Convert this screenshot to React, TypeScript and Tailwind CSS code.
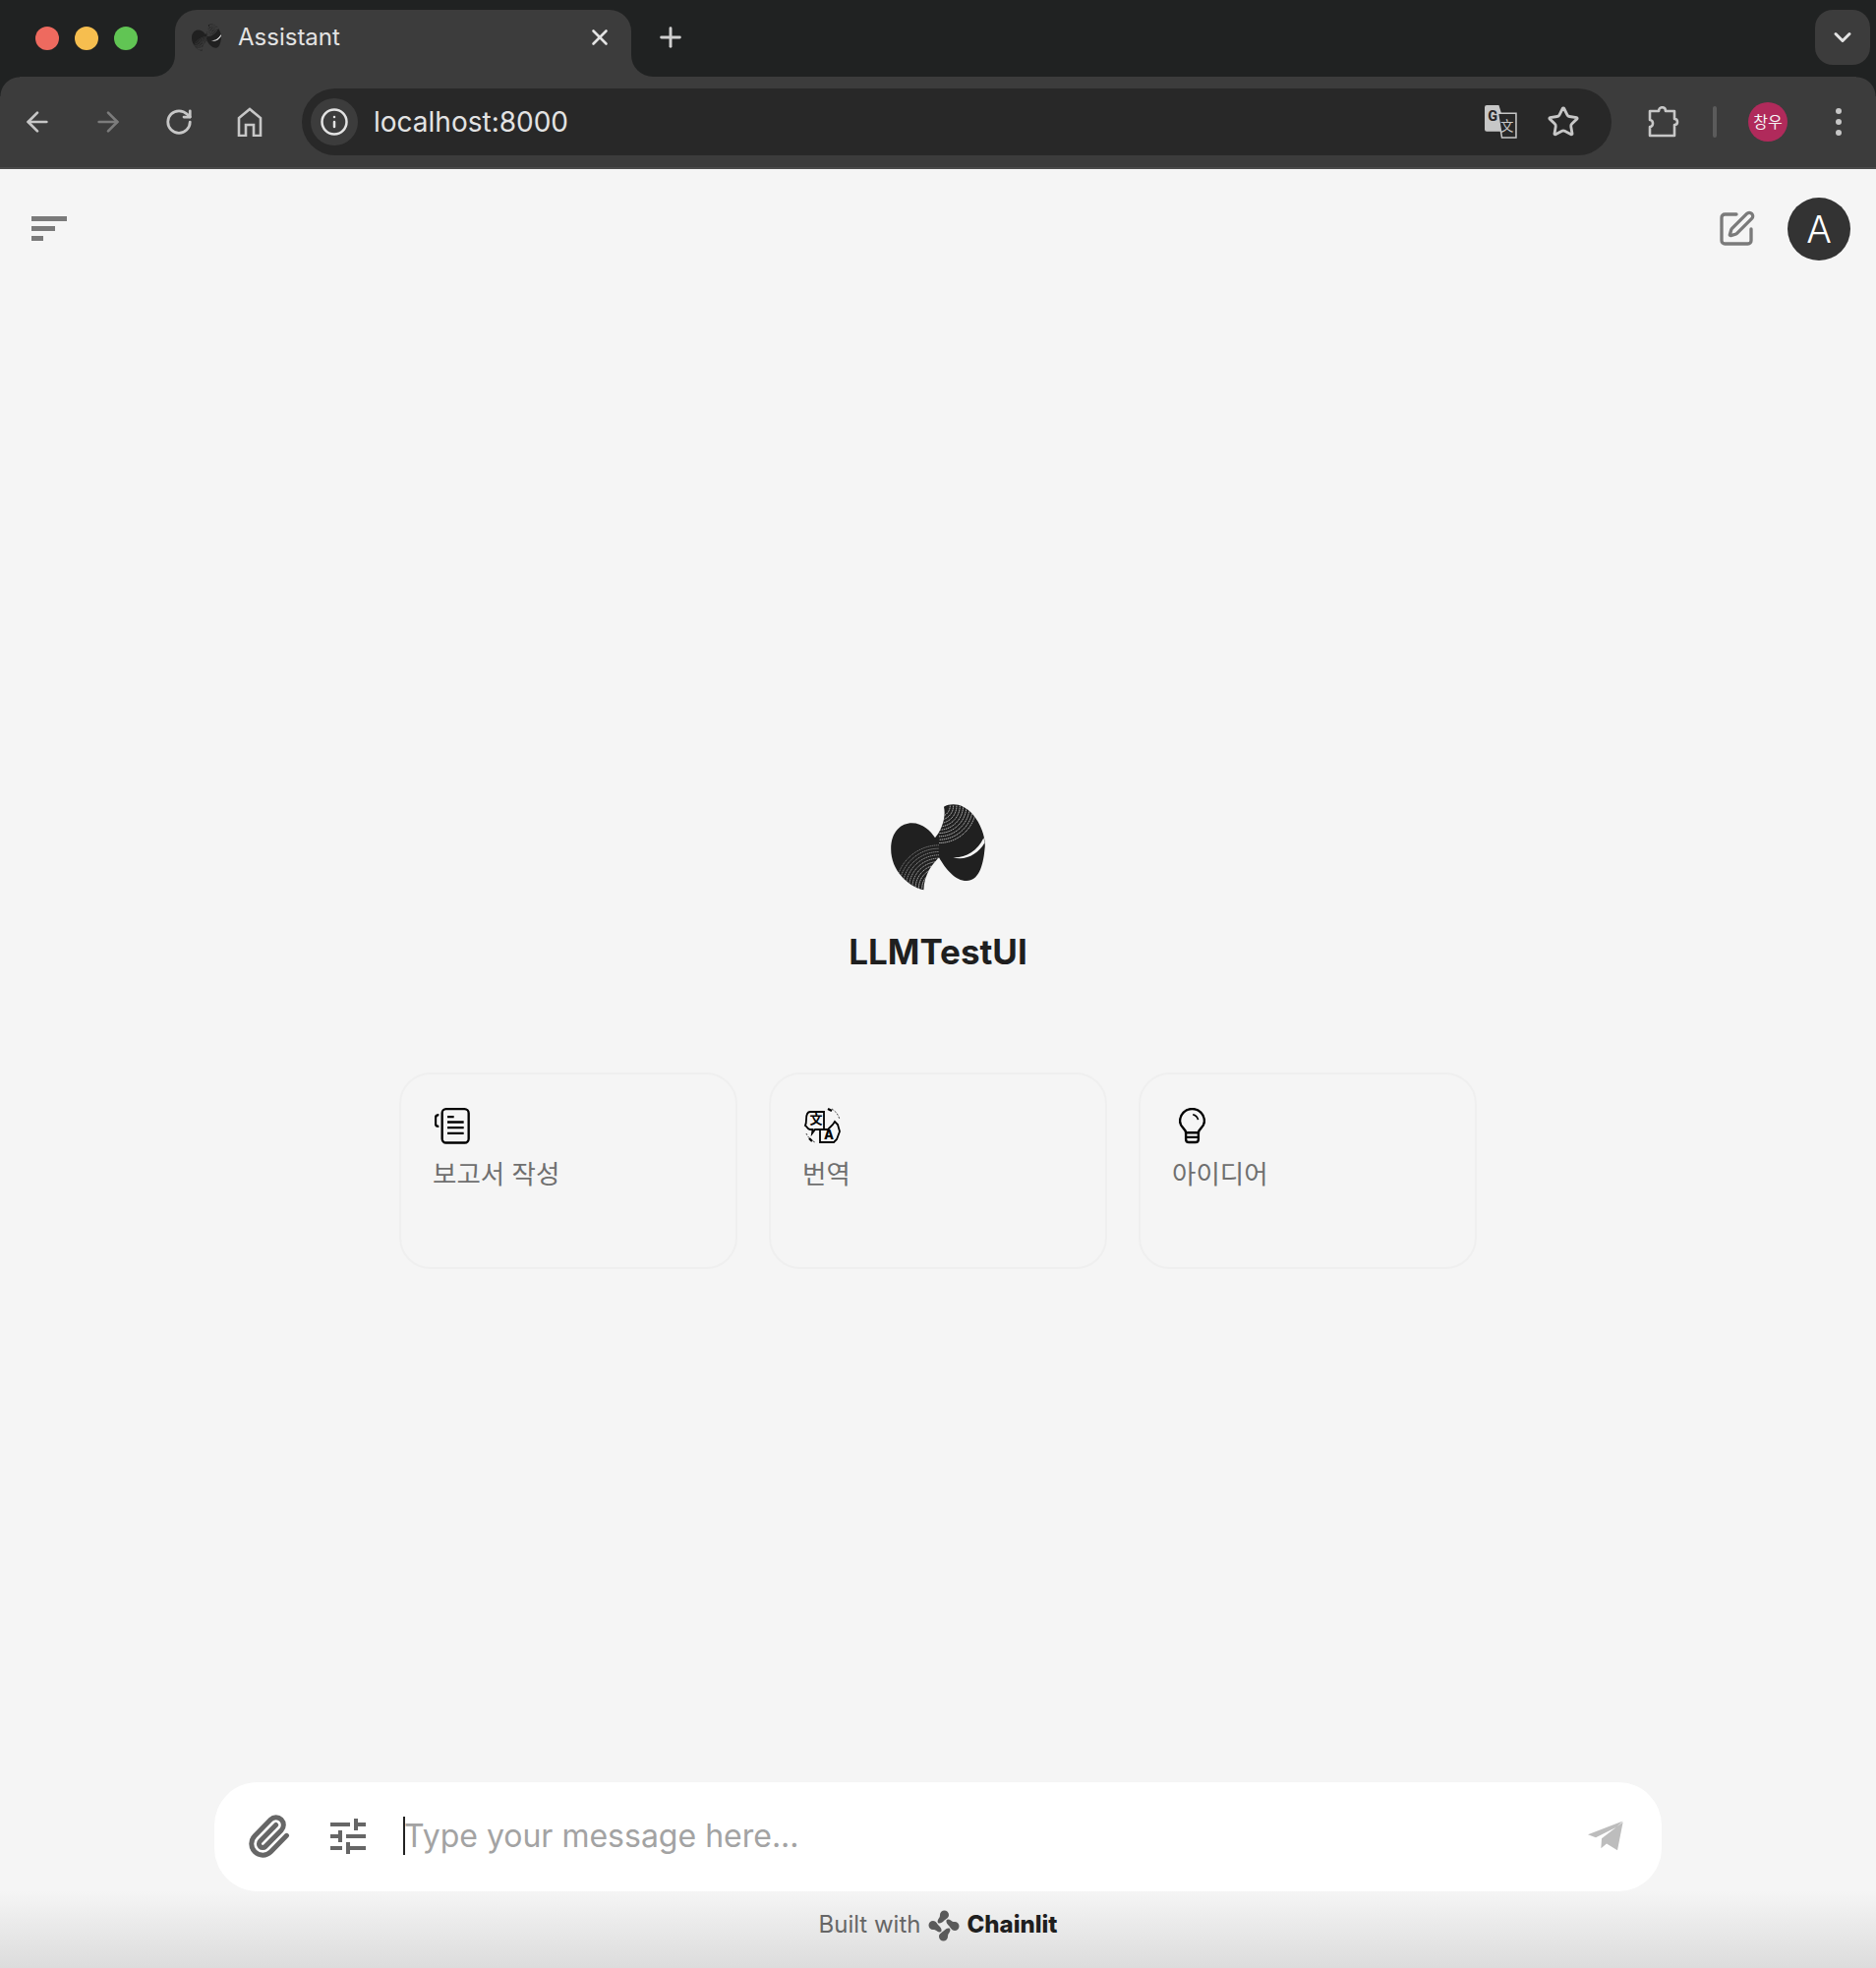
import React from "react";
import { ArrowLeft, ArrowRight, ChevronDown, Info, Paperclip, Plus, RotateCw, SquarePen, Star, X } from "lucide-react";

const leftRadii = [52, 62, 72, 82, 92, 102, 112, 122, 132];
const rightRadii = [34, 44, 54, 64, 74, 84, 94, 104, 114];

// twisted ribbon mark, drawn in the coordinates of the crop it was measured from
const Logo = ({ id, className = "" }: { id: string; className?: string }) => (
  <svg viewBox="198 84 288 268" className={className}>
    <defs>
      <clipPath id={id}>
        <path d="M360 95C385 82 420 85 450 120C475 150 490 195 485 225C480 280 465 322 430 322C395 322 365 285 345 250C325 270 300 300 298 350C250 340 198 290 198 225C198 170 230 145 262 145C295 145 320 170 333 190C350 170 368 130 360 95Z" />
      </clipPath>
    </defs>
    <path
      fill="#202020"
      d="M360 95C385 82 420 85 450 120C475 150 490 195 485 225C480 280 465 322 430 322C395 322 365 285 345 250C325 270 300 300 298 350C250 340 198 290 198 225C198 170 230 145 262 145C295 145 320 170 333 190C350 170 368 130 360 95Z"
    />
    <g clipPath={`url(#${id})`} fill="none" stroke="#fff" strokeWidth="2.4" strokeDasharray="4 2">
      {leftRadii.map((r) => (
        <path key={r} d={`M${345 - r} 345A${r} ${r} 0 0 1 345 ${345 - r}`} opacity={0.5 + (132 - r) / 160} />
      ))}
      {rightRadii.map((r) => (
        <path key={r} d={`M${345 + r} 92A${r} ${r} 0 0 1 345 ${92 + r}`} opacity={0.9} />
      ))}
    </g>
    <path fill="#f5f5f5" d="M388 250C425 252 462 232 482 190L485 205C465 240 425 262 388 250Z" />
  </svg>
);

const ReportIcon = () => (
  <svg viewBox="127 143 108 110" className="ml-[2px] h-[37px] w-[36px]" fill="none" stroke="#000" strokeWidth="7">
    <path d="M150 158a12 12 0 0 1 12-12h56a13 13 0 0 1 13 13v78a12 12 0 0 1-12 12h-57a12 12 0 0 1-12-12z" />
    <path d="M166 170h20M166 186h50M166 203h50M166 220h50" />
    <path d="M140 164c-8 0-10 4-10 9v18c0 5 4 8 10 8" />
  </svg>
);

const TranslateIcon = () => (
  <svg viewBox="0 0 40 40" className="h-[40px] w-[40px]" fill="none" stroke="#000" strokeWidth="1.8">
    <path d="M8 6h14v18H13l-3 4 .5-4H8c-3 0-3-3-5-4 1-2 1-4 1-6 0-4 1-8 4-8z" />
    <path d="M18 24v13h14l3-3 3-8-2-7-3-3-2 3-5 5z" fill="#f5f5f5" />
    <path d="M26 3l4 2M10 36l-3-3" strokeWidth="2.4" />
    <path d="M30 3a18 18 0 0 1 8 11M4 28a18 18 0 0 0 9 9" strokeWidth="0.8" strokeDasharray="2 1.5" />
    <text x="14" y="18" textAnchor="middle" fontSize="13" fontWeight="700" fill="#000" stroke="none" fontFamily="'Noto Sans CJK SC', sans-serif">文</text>
    <text x="27" y="34" textAnchor="middle" fontSize="13" fontWeight="800" fill="#000" stroke="none" fontFamily="Inter, sans-serif">A</text>
  </svg>
);

const BulbIcon = () => (
  <svg viewBox="596 143 80 110" className="ml-[7px] h-[37px] w-[27px]" fill="none" stroke="#000" strokeWidth="7">
    <path d="M617 218c0-12-18-15-18-35a37 37 0 0 1 74 0c0 20-18 23-18 35z" />
    <path d="M617 218v20c0 5 4 9 9 9h20c5 0 9-4 9-9v-20M617 232h38" />
    <path d="M638 163c8 2 14 8 16 16" strokeWidth="5" />
  </svg>
);

const SuggestionCard = ({ icon, label }: { icon: React.ReactNode; label: string }) => (
  <div className="h-[200px] w-[344px] rounded-[32px] border-2 border-[#efefef] bg-[#f5f5f5] px-[32px] pt-[32px]">
    <div className="flex h-[40px] items-center">{icon}</div>
    <p className="mt-[9px] text-[26.5px] leading-[40px] text-[#6f6f6f]">{label}</p>
  </div>
);

const App = () => {
  return (
    <div className="flex h-[2002px] w-[1908px] flex-col overflow-hidden bg-[#f5f5f5] font-['Inter','Noto_Sans_CJK_KR',sans-serif]">
      {/* Browser chrome */}
      <header className="bg-[#3c3c3c]">
        <div className="flex h-[78px]">
          <div className="flex w-[178px] items-start gap-[16px] rounded-br-[22px] bg-[#202222] pl-[36px] pt-[27px]">
            <span className="h-[24px] w-[24px] rounded-full bg-[#ee6a5f]" />
            <span className="h-[24px] w-[24px] rounded-full bg-[#f6be4f]" />
            <span className="h-[24px] w-[24px] rounded-full bg-[#61c554]" />
          </div>
          <div className="w-[464px] bg-[#202222] pt-[10px]">
            <div className="flex h-[68px] items-start rounded-t-[22px] bg-[#3c3c3c] pl-[17px] pr-[19px] pt-[13px]">
              <Logo id="favicon" className="h-[30px] w-[30px]" />
              <span className="ml-[17px] text-[24px] leading-[30px] text-[#e3e3e3]">Assistant</span>
              <X className="ml-auto mt-[2px] h-[26px] w-[26px] text-[#e3e3e3]" strokeWidth={2.4} />
            </div>
          </div>
          <div className="flex flex-1 items-start rounded-bl-[22px] bg-[#202222] pl-[24px] pr-[6px] pt-[10px]">
            <Plus className="mt-[12px] h-[32px] w-[32px] text-[#d0d0d0]" strokeWidth={2.2} />
            <div className="ml-auto flex h-[56px] w-[56px] items-center justify-center rounded-[18px] bg-[#3c3c3c]">
              <ChevronDown className="h-[28px] w-[28px] text-[#e3e3e3]" strokeWidth={2.6} />
            </div>
          </div>
        </div>
        <div className="relative flex h-[94px] items-center border-b-2 border-[#4a4a4a]">
          <span className="absolute left-0 top-0 h-[20px] w-[20px] bg-[radial-gradient(circle_at_100%_100%,transparent_19px,#202222_20px)]" />
          <span className="absolute right-0 top-0 h-[20px] w-[20px] bg-[radial-gradient(circle_at_0%_100%,transparent_19px,#202222_20px)]" />
          <ArrowLeft className="ml-[22px] h-[32px] w-[32px] text-[#c7c7c7]" strokeWidth={2} />
          <ArrowRight className="ml-[40px] h-[32px] w-[32px] text-[#7c7c7c]" strokeWidth={2} />
          <RotateCw className="ml-[41px] h-[30px] w-[30px] text-[#c7c7c7]" strokeWidth={2.2} />
          <svg viewBox="0 0 26 30" className="ml-[44px] h-[30px] w-[26px]" fill="none" stroke="#c7c7c7" strokeWidth="2.6">
            <path d="M2 29V11L13 2l11 9v18h-7V18H9v11z" />
          </svg>
          <div className="ml-[40px] flex h-[68px] w-[1332px] items-center rounded-full bg-[#282828] pl-[9px] pr-[32px]">
            <div className="flex h-[48px] w-[48px] items-center justify-center rounded-full bg-[#3c3c3c]">
              <Info className="h-[30px] w-[30px] text-[#e3e3e3]" strokeWidth={2} />
            </div>
            <span className="ml-[16px] text-[28px] leading-none text-[#e3e3e3]">localhost:8000</span>
            <svg viewBox="0 0 32 33" className="ml-auto h-[34px] w-[33px]">
              <path fill="#c7c7c7" d="M2 0h12l8 26H2a2 2 0 0 1-2-2V2a2 2 0 0 1 2-2z" />
              <path fill="#282828" stroke="#c7c7c7" strokeWidth="1.5" d="M13 8h18v24H17z" />
              <text x="8" y="16" textAnchor="middle" fontSize="14" fontWeight="800" fill="#282828" fontFamily="Roboto, sans-serif">G</text>
              <text x="22" y="25" textAnchor="middle" fontSize="13" fill="#c7c7c7" fontFamily="'Noto Sans CJK SC', sans-serif">文</text>
            </svg>
            <Star className="ml-[30px] h-[34px] w-[34px] text-[#c7c7c7]" strokeWidth={2} />
          </div>
          <svg viewBox="0 0 32 32" className="ml-[37px] h-[32px] w-[32px]" fill="none" stroke="#c7c7c7" strokeWidth="2.6" strokeLinejoin="round">
            <path d="M2 5h9c0-5 7-5 7 0h9v8c4 0 4 6 0 6v11H2v-9c4 0 4-7 0-7z" />
          </svg>
          <span className="ml-[34px] h-[32px] w-[4px] rounded-full bg-[#5b5b5b]" />
          <div className="ml-[32px] flex h-[40px] w-[40px] items-center justify-center rounded-full bg-[#b02a5b] text-[16px] text-[#f5f5f5]">
            창우
          </div>
          <div className="ml-[49px] flex flex-col gap-[5px]">
            <span className="h-[6px] w-[6px] rounded-full bg-[#c7c7c7]" />
            <span className="h-[6px] w-[6px] rounded-full bg-[#c7c7c7]" />
            <span className="h-[6px] w-[6px] rounded-full bg-[#c7c7c7]" />
          </div>
        </div>
      </header>

      {/* Page header */}
      <div className="flex h-[110px] items-start justify-between pl-[32px] pr-[26px] pt-[29px]">
        <div className="mt-[19px] flex flex-col gap-[5px]">
          <span className="h-[5px] w-[36px] bg-[#7a7a7a]" />
          <span className="h-[5px] w-[24px] bg-[#7a7a7a]" />
          <span className="h-[5px] w-[12px] bg-[#7a7a7a]" />
        </div>
        <div className="flex items-center gap-[32px]">
          <SquarePen className="h-[40px] w-[40px] text-[#7a7a7a]" strokeWidth={2} />
          <div className="flex h-[64px] w-[64px] items-center justify-center rounded-full bg-[#333333] text-[38px] font-light text-white">
            A
          </div>
        </div>
      </div>

      {/* Welcome block */}
      <main className="flex flex-1 flex-col items-center justify-center pt-[13px]">
        <Logo id="logo" className="h-[89px] w-[96px]" />
        <h1 className="mt-[40px] text-[35px] font-bold leading-[44px] text-[#1f1f1f]">LLMTestUI</h1>
        <div className="mt-[101px] flex gap-[32px]">
          <SuggestionCard icon={<ReportIcon />} label="보고서 작성" />
          <SuggestionCard icon={<TranslateIcon />} label="번역" />
          <SuggestionCard icon={<BulbIcon />} label="아이디어" />
        </div>
      </main>

      {/* Composer */}
      <div className="mx-auto flex h-[111px] w-[1472px] items-center rounded-[44px] bg-white pb-[2px] pl-[32px] pr-[39px]">
        <Paperclip className="h-[46px] w-[46px] text-[#666666]" strokeWidth={2.6} />
        <svg viewBox="3 3 18 18" className="ml-[40px] h-[36px] w-[36px]" fill="#666666">
          <path d="M3 17v2h6v-2H3zM3 5v2h10V5H3zm10 16v-2h8v-2h-8v-2h-2v6h2zM7 9v2H3v2h4v2h2V9H7zm14 4v-2H11v2h10zm-6-4h2V7h4V5h-4V3h-2v6z" />
        </svg>
        <span className="ml-[38px] h-[39px] w-[2px] bg-[#222222]" />
        <input
          readOnly
          placeholder="Type your message here..."
          className="-ml-[1px] flex-1 bg-transparent text-[32px] outline-none placeholder:text-[#a3a3a3]"
        />
        <svg viewBox="168 158 108 92" className="h-[31px] w-[36px]" fill="#bdbdbd">
          <path d="M275 159L168 200l24 9 63-31zM275 162L258 248l-33-20-17 14 2-30z" />
        </svg>
      </div>

      {/* Footer */}
      <footer className="flex h-[78px] items-start justify-center bg-linear-to-b from-[#f5f5f5] to-[#dcdcdc] pt-[19px]">
        <span className="text-[24px] leading-[30px] text-[#666666]">Built with</span>
        <svg viewBox="0 0 32 32" className="ml-[8px] h-[32px] w-[32px]" fill="#5a5a5a">
          {[0, 90, 180, 270].map((deg) => (
            <path
              key={deg}
              transform={`rotate(${deg} 16 16)`}
              d="M12 5a4.500 4.500 0 0 1 9 0c0 3-3 4-5 6-1.500 1.500-3.500 3-5.500 2.500-1.500-1-1-3 0-4.500 1-1.500 1.500-2 1.500-4z"
            />
          ))}
        </svg>
        <span className="ml-[7px] text-[24px] font-extrabold leading-[30px] text-[#1f1f1f]">Chainlit</span>
      </footer>
    </div>
  );
};

export default App;
